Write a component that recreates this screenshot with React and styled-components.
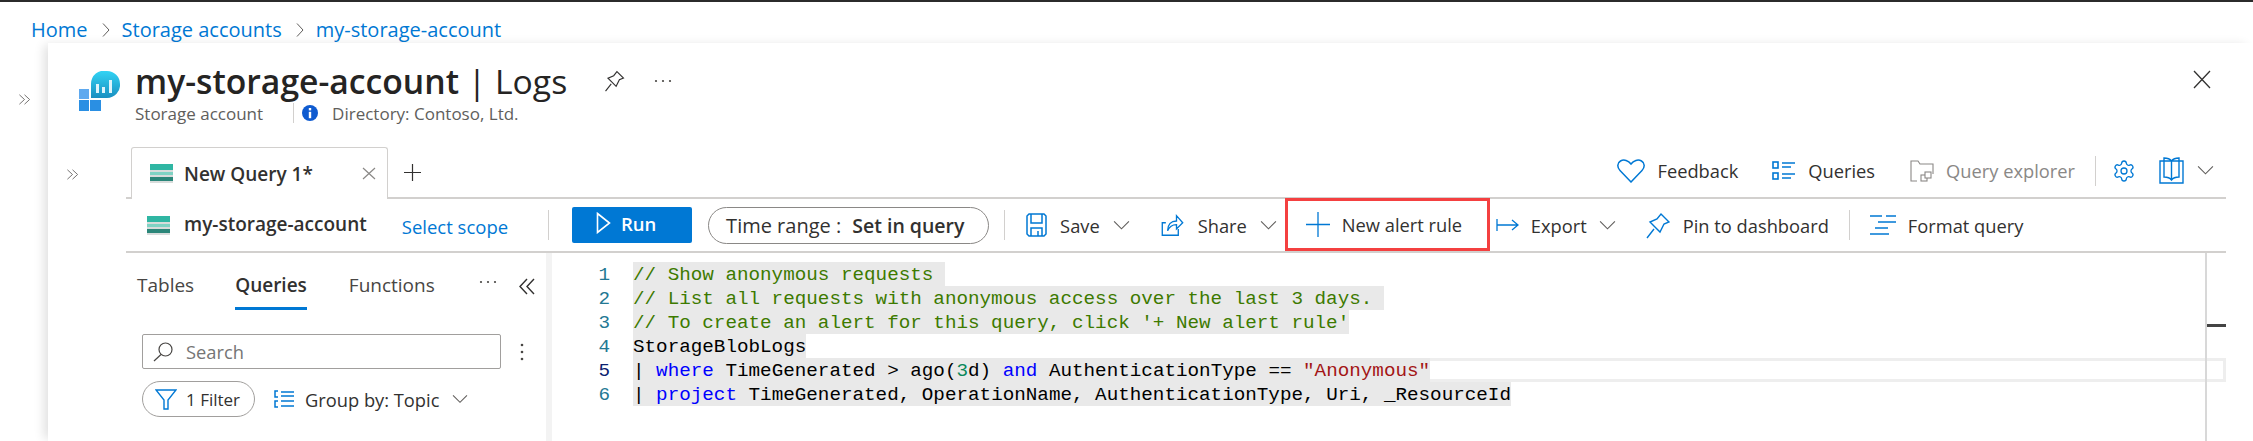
import React from "react";
import styled, { createGlobalStyle } from "styled-components";
import { Settings } from "lucide-react";

const GlobalStyle = createGlobalStyle`
  html, body {
    margin: 0;
    background: #fff;
    font-family: "Open Sans", "Noto Sans", sans-serif;
    color: #323130;
  }
`;

const Page = styled.div`
  width: 2253px;
  height: 441px;
  overflow: hidden;
  border-top: 2px solid #2b2b2b;
  box-sizing: border-box;
`;

const Breadcrumb = styled.div`
  height: 41px;
  display: flex;
  align-items: center;
  padding: 14px 0 0 31px;
  box-sizing: border-box;
  font-size: 20px;
  color: #0078d4;
`;

const CrumbSep = styled.span`
  display: flex;
  margin: 0 12px 0 14px;
`;

const Body = styled.div`
  display: flex;
  height: 398px;
`;

const OuterRail = styled.div`
  width: 48px;
  padding: 45px 0 0 18px;
  box-sizing: border-box;
  color: #605e5c;
`;

const Blade = styled.div`
  flex: 1;
  box-shadow: -6px 0 10px -2px rgba(0, 0, 0, 0.12);
  display: flex;
  flex-direction: column;
`;

const Header = styled.div`
  height: 104px;
  display: flex;
  padding: 28px 0 0 31px;
  box-sizing: border-box;
`;

const ResourceIcon = styled.div`
  width: 41px;
  margin-right: 15px;
`;

const HeaderText = styled.div`
  display: flex;
  flex-direction: column;
`;

const TitleRow = styled.div`
  display: flex;
  align-items: center;
  height: 36px;
  margin-top: -8px;
`;

const Title = styled.h1`
  margin: 0;
  font-size: 33.7px;
  font-weight: 600;
  white-space: nowrap;
  color: #252423;
`;

const TitleLight = styled.span`
  font-weight: 400;
`;

const PinBtn = styled.span`
  display: flex;
  margin-left: 36px;
`;

const MoreDots = styled.span`
  display: flex;
  margin-left: 28px;
`;

const Meta = styled.div`
  display: flex;
  align-items: center;
  height: 30px;
  margin-top: -1px;
  font-size: 17px;
  color: #605e5c;
  white-space: nowrap;
`;

const MetaDivider = styled.span`
  width: 1px;
  height: 20px;
  background: #d2d0ce;
  margin: 0 8px 0 30px;
`;

const InfoDot = styled.span`
  display: flex;
  margin-right: 14px;
`;

const CloseBtn = styled.span`
  display: flex;
  margin: -1px 0 0 auto;
  padding-right: 42px;
`;

const Workspace = styled.div`
  flex: 1;
  display: flex;
`;

const InnerRail = styled.div`
  width: 78px;
  padding: 16px 0 0 18px;
  box-sizing: border-box;
  color: #605e5c;
`;

const Main = styled.div`
  width: 2100px;
  display: flex;
  flex-direction: column;
`;

const TabRow = styled.div`
  height: 52px;
  display: flex;
  align-items: flex-end;
  border-bottom: 2px solid #d2d0ce;
  box-sizing: border-box;
  padding-left: 5px;
  flex: none;
`;

const Tab = styled.div`
  width: 257px;
  height: 52px;
  margin-bottom: -2px;
  box-sizing: border-box;
  background: #fff;
  border: 1px solid #d2d0ce;
  border-bottom: none;
  border-radius: 3px 3px 0 0;
  display: flex;
  align-items: center;
  padding: 0 0 0 18px;
  font-size: 19px;
  font-weight: 600;
  white-space: nowrap;
`;

const TabTitle = styled.span`
  margin-left: 11px;
  flex: 1;
`;

const TabClose = styled.span`
  display: flex;
  margin-right: 11px;
`;

const AddTab = styled.span`
  display: flex;
  align-self: center;
  margin-left: 16px;
`;

const TabActions = styled.div`
  align-self: center;
  margin: 0 0 3px auto;
  display: flex;
  align-items: center;
  padding-right: 12px;
  font-size: 18.3px;
  white-space: nowrap;
`;

const Action = styled.span`
  display: flex;
  align-items: center;
  gap: 12px;
  margin-left: ${(p) => p.$left || 0}px;
  color: ${(p) => (p.$muted ? "#8a8886" : "#323130")};
`;

const Divider = styled.span`
  width: 1px;
  height: 30px;
  background: #d2d0ce;
  flex: none;
  margin: ${(p) => p.$margin};
`;

const Toolbar = styled.div`
  height: 54px;
  flex: none;
  display: flex;
  align-items: center;
  border-bottom: 2px solid #d2d0ce;
  box-sizing: border-box;
  font-size: 18.3px;
  white-space: nowrap;
  padding-left: 21px;
`;

const ScopeName = styled.span`
  margin-left: 14px;
  font-size: 19px;
  font-weight: 600;
  margin-bottom: 3px;
`;

const ScopeLink = styled.span`
  margin-left: 35px;
  font-size: 18.5px;
  color: #0078d4;
  margin-top: 3px;
`;

const RunButton = styled.button`
  width: 120px;
  height: 36px;
  border: none;
  border-radius: 2px;
  background: #0078d4;
  color: #fff;
  font: inherit;
  font-size: 18.5px;
  font-weight: 600;
  display: flex;
  align-items: center;
  justify-content: center;
  gap: 10px;
  padding: 0 12px 4px 0;
`;

const TimePill = styled.div`
  width: 281px;
  height: 37px;
  margin-left: 16px;
  border: 1px solid #8a8886;
  border-radius: 19px;
  box-sizing: border-box;
  display: flex;
  align-items: center;
  padding-left: 17px;
  gap: 11px;
  font-size: 20px;
`;

const Strong = styled.span`
  font-weight: 600;
  font-size: 19.5px;
`;

const ToolItem = styled.span`
  display: flex;
  align-items: center;
  gap: ${(p) => p.$gap || 13}px;
  margin-left: ${(p) => p.$left || 0}px;
`;

const Caret = styled.span`
  display: flex;
  margin-left: ${(p) => p.$left || 0}px;
`;

const AlertButton = styled.span`
  align-self: flex-start;
  height: 53px;
  width: 205px;
  margin: -1px 0 0 8px;
  box-sizing: border-box;
  border: 3px solid #f44040;
  display: flex;
  align-items: center;
  padding: 0 0 0 18px;
  gap: 12px;
`;

const Workbench = styled.div`
  flex: 1;
  display: flex;
  min-height: 0;
`;

const SidePane = styled.div`
  width: 426px;
  flex: none;
  box-sizing: border-box;
  border-right: 6px solid #f3f3f3;
  font-size: 18.3px;
`;

const SideTabs = styled.div`
  height: 58px;
  display: flex;
  align-items: flex-start;
  padding: 19px 0 0 11px;
  box-sizing: border-box;
  font-size: 19px;
`;

const SideTab = styled.span`
  height: 38px;
  box-sizing: border-box;
  margin-right: ${(p) => p.$right}px;
  font-weight: ${(p) => (p.$active ? 600 : 400)};
  border-bottom: ${(p) => (p.$active ? "3px solid #0078d4" : "none")};
  color: ${(p) => (p.$active ? "#323130" : "#484644")};
`;

const SideIcon = styled.span`
  display: flex;
  margin: ${(p) => p.$margin};
`;

const SearchRow = styled.div`
  display: flex;
  align-items: center;
  margin: 23px 0 0 16px;
`;

const SearchBox = styled.div`
  width: 359px;
  height: 35px;
  border: 1px solid #a19f9d;
  border-radius: 2px;
  box-sizing: border-box;
  display: flex;
  align-items: center;
  padding-left: 10px;
  gap: 13px;
  color: #757575;
`;

const FilterRow = styled.div`
  display: flex;
  align-items: center;
  margin: 12px 0 0 16px;
`;

const FilterPill = styled.div`
  width: 113px;
  height: 36px;
  border: 1px solid #a19f9d;
  border-radius: 18px;
  box-sizing: border-box;
  display: flex;
  align-items: center;
  padding-left: 12px;
  gap: 9px;
  font-size: 17px;
`;

const GroupBy = styled.span`
  display: flex;
  align-items: center;
  margin-left: 19px;
  gap: 11px;
`;

const Editor = styled.div`
  flex: 1;
  position: relative;
  padding-top: 9px;
`;

const CodeLine = styled.div`
  height: 24px;
  display: flex;
  font-family: "Liberation Mono", "DejaVu Sans Mono", monospace;
  font-size: 19.26px;
  line-height: 26px;
  white-space: pre;
`;

const LineNo = styled.span`
  width: 81px;
  padding-right: 23px;
  box-sizing: border-box;
  text-align: right;
  flex: none;
  color: ${(p) => (p.$current ? "#0b216f" : "#237893")};
`;

const CodeText = styled.span`
  position: relative;
  background: ${(p) => (p.$selected ? "#e9e9e9" : "transparent")};
  color: ${(p) => p.$color || "#000"};
`;

const CurrentLine = styled.div`
  position: absolute;
  left: 81px;
  width: 1593px;
  top: 105px;
  height: 24px;
  box-sizing: border-box;
  border: 3px solid #eee;
  border-left: none;
`;

const Kw = styled.span`
  color: #0000ff;
`;

const Str = styled.span`
  color: #a31515;
`;

const Num = styled.span`
  color: #09885a;
`;

const Ruler = styled.div`
  position: absolute;
  left: 1653px;
  top: 0;
  bottom: 0;
  width: 21px;
  box-sizing: border-box;
  border-left: 2px solid #d8d8d8;
`;

const RulerMark = styled.div`
  position: absolute;
  left: 0;
  right: 0;
  top: ${(p) => p.$top}px;
  height: 3px;
  background: ${(p) => p.$color};
`;

const Chevron = ({ size = 18 }) => (
  <svg width={size} height={size * 0.6} viewBox="0 0 18 11" fill="none" stroke="#605e5c" strokeWidth="1.2">
    <path d="M1 1.5l8 8 8-8" />
  </svg>
);

const Doubles = () => (
  <svg width="13" height="11" viewBox="0 0 14 14" preserveAspectRatio="none" fill="none" stroke="#605e5c" strokeWidth="1">
    <path d="M1.5 1L7 7l-5.5 6M7 1l5.500 6L7 13" />
  </svg>
);

const Sep = () => (
  <CrumbSep>
    <svg width="8" height="16" viewBox="0 0 8 16" fill="none" stroke="#605e5c" strokeWidth="1">
      <path d="M1 1.5L7 8l-6 6.5" />
    </svg>
  </CrumbSep>
);

const QueryIcon = () => (
  <svg width="23" height="19" viewBox="0 0 23 19">
    <rect width="23" height="19" fill="#d8dcdb" />
    <rect width="23" height="6" fill="#2fb6a3" />
    <rect y="8" width="23" height="3" fill="#7fd3c4" />
    <rect y="13" width="23" height="4" fill="#2b8679" />
  </svg>
);

const Pin = ({ color = "#323130", w = 23, h = 22 }) => (
  <svg width={w} height={h} viewBox="0 0 24 27" fill="none" stroke={color} strokeWidth="1.4">
    <path d="M15 2l8 8-5 2-4 8-10-10 7-3zM8 17L1 26" />
  </svg>
);

const Dots = () => (
  <svg width="18" height="4" viewBox="0 0 18 4" fill="#484644">
    <circle cx="2" cy="2" r="1.1" />
    <circle cx="9" cy="2" r="1.1" />
    <circle cx="16" cy="2" r="1.1" />
  </svg>
);

export default function App() {
  return (
    <Page>
      <GlobalStyle />
      <Breadcrumb>
        Home
        <Sep />
        Storage accounts
        <Sep />
        my-storage-account
      </Breadcrumb>
      <Body>
        <OuterRail>
          <Doubles />
        </OuterRail>
        <Blade>
          <Header>
            <ResourceIcon>
              <svg width="41" height="40" viewBox="0 0 41 40">
                <defs>
                  <linearGradient id="bubble" x1="0" y1="0" x2="0" y2="1">
                    <stop offset="0" stopColor="#32d4f5" />
                    <stop offset="1" stopColor="#1a8fc0" />
                  </linearGradient>
                </defs>
                <path d="M28 0a13 13 0 0 1 13 13 13 13 0 0 1-13 14H12V13A13 13 0 0 1 28 0z" fill="url(#bubble)" />
                <rect x="17" y="13" width="3" height="9" fill="#dff4fb" />
                <rect x="23" y="16" width="3" height="6" fill="#dff4fb" />
                <rect x="30" y="9" width="3" height="13" fill="#dff4fb" />
                <rect y="18" width="10" height="10" fill="#5ea9ef" />
                <rect y="29" width="10" height="11" fill="#2a8fe3" />
                <rect x="11" y="29" width="11" height="11" fill="#2a8fe3" />
              </svg>
            </ResourceIcon>
            <HeaderText>
              <TitleRow>
                <Title>
                  my-storage-account <TitleLight>| Logs</TitleLight>
                </Title>
                <PinBtn>
                  <Pin />
                </PinBtn>
                <MoreDots>
                  <Dots />
                </MoreDots>
              </TitleRow>
              <Meta>
                Storage account
                <MetaDivider />
                <InfoDot>
                  <svg width="16" height="16" viewBox="0 0 16 16">
                    <circle cx="8" cy="8" r="8" fill="#0f5bd0" />
                    <rect x="6.8" y="6.8" width="2.4" height="6.4" fill="#fff" />
                    <rect x="6.8" y="3" width="2.4" height="2.4" fill="#fff" />
                  </svg>
                </InfoDot>
                Directory: Contoso, Ltd.
              </Meta>
            </HeaderText>
            <CloseBtn>
              <svg width="18" height="19" viewBox="0 0 18 19" fill="none" stroke="#323130" strokeWidth="1.3">
                <path d="M1 1l16 17M17 1L1 18" />
              </svg>
            </CloseBtn>
          </Header>
          <Workspace>
            <InnerRail>
              <Doubles />
            </InnerRail>
            <Main>
              <TabRow>
                <Tab>
                  <QueryIcon />
                  <TabTitle>New Query 1*</TabTitle>
                  <TabClose>
                    <svg width="14" height="13" viewBox="0 0 14 13" fill="none" stroke="#8a8886" strokeWidth="1.2">
                      <path d="M1 1l12 11M13 1L1 12" />
                    </svg>
                  </TabClose>
                </Tab>
                <AddTab>
                  <svg width="17" height="17" viewBox="0 0 17 17" fill="none" stroke="#323130" strokeWidth="1.2">
                    <path d="M8.5 0v17M0 8.5h17" />
                  </svg>
                </AddTab>
                <TabActions>
                  <Action>
                    <svg width="28" height="24" viewBox="0 0 28 24" fill="none" stroke="#0078d4" strokeWidth="1.5">
                      <path d="M14 23L3 11.5C0 8.500 0 4 3.500 2 7 0 11.500 1.500 14 5c2.500-3.500 7-5 10.500-3 3.500 2 3.500 6.500.500 9.500z" />
                    </svg>
                    Feedback
                  </Action>
                  <Action $left={34}>
                    <svg width="24" height="20" viewBox="0 0 24 20" fill="none" stroke="#0078d4" strokeWidth="1.6">
                      <rect x="1" y="1" width="5" height="6" />
                      <rect x="1" y="12" width="5" height="6" />
                      <path d="M10 2h13M10 6h9M10 13h13M10 17h9" />
                    </svg>
                    Queries
                  </Action>
                  <Action $left={35} $muted>
                    <svg width="24" height="22" viewBox="0 0 24 22" fill="none" stroke="#8a8886" strokeWidth="1.1">
                      <path d="M7 21H1V1h7l2 3h13v10" />
                      <rect x="11" y="15" width="6" height="6" fill="#fff" />
                      <rect x="15" y="12" width="6" height="6" fill="#fff" />
                    </svg>
                    Query explorer
                  </Action>
                  <Divider $margin="0 16px 0 20px" />
                  <Settings size={24} color="#0078d4" strokeWidth={1.3} />
                  <Action $left={23}>
                    <svg width="25" height="27" viewBox="0 0 25 27" fill="none" stroke="#0078d4" strokeWidth="1.4">
                      <path d="M1 4h23v22H1zM5 1c3 0 6 1 7.500 3C14 2 17 1 20 1v19c-3 0-6 1-7.500 3C11 21 8 20 5 20zM12.500 4v19" />
                    </svg>
                  </Action>
                  <Action $left={13}>
                    <Chevron size={17} />
                  </Action>
                </TabActions>
              </TabRow>
              <Toolbar>
                <QueryIcon />
                <ScopeName>my-storage-account</ScopeName>
                <ScopeLink>Select scope</ScopeLink>
                <Divider $margin="0 23px 0 40px" />
                <RunButton>
                  <svg width="15" height="22" viewBox="0 0 15 22" fill="none" stroke="#fff" strokeWidth="1.6">
                    <path d="M1.500 1.500l12 9.500-12 9.500z" />
                  </svg>
                  Run
                </RunButton>
                <TimePill>
                  Time range :<Strong>Set in query</Strong>
                </TimePill>
                <Divider $margin="0 21px 0 15px" />
                <ToolItem>
                  <svg width="21" height="24" viewBox="0 0 21 24" fill="none" stroke="#0078d4" strokeWidth="1.5">
                    <path d="M3 1h15l2 2v18l-2 2H3l-2-2V3zM5 1v9h11V1M5 23v-8h11v8M12 18v5" />
                  </svg>
                  Save
                  <Chevron size={17} />
                </ToolItem>
                <ToolItem $left={30}>
                  <svg width="25" height="24" viewBox="0 0 25 27" fill="none" stroke="#0078d4" strokeWidth="1.5">
                    <path d="M5 11H1v14h18v-7M7 20c0-7 4-11 10-11V3l7 8-7 7v-5c-4 0-8 2-10 7z" />
                  </svg>
                  Share
                  <Chevron size={17} />
                </ToolItem>
                <AlertButton>
                  <svg width="24" height="25" viewBox="0 0 24 25" fill="none" stroke="#0078d4" strokeWidth="1.3">
                    <path d="M12 0v25M0 12.500h24" />
                  </svg>
                  New alert rule
                </AlertButton>
                <ToolItem $left={6} $gap={12}>
                  <svg width="23" height="14" viewBox="0 0 23 14" fill="none" stroke="#0078d4" strokeWidth="1.3">
                    <path d="M1 1v12M1 7h21M16 2l6 5-6 5" />
                  </svg>
                  Export
                  <Chevron size={17} />
                </ToolItem>
                <ToolItem $left={30}>
                  <Pin color="#0078d4" w={24} h={27} />
                  Pin to dashboard
                </ToolItem>
                <Divider $margin="0 19px 0 20px" />
                <ToolItem $gap={11}>
                  <svg width="28" height="22" viewBox="0 0 28 22" fill="none" stroke="#0078d4" strokeWidth="1.5">
                    <path d="M1 2h12M17 2h10M9 8h18M6 14h13M1 20h19" />
                  </svg>
                  Format query
                </ToolItem>
              </Toolbar>
              <Workbench>
                <SidePane>
                  <SideTabs>
                    <SideTab $right={41}>Tables</SideTab>
                    <SideTab $right={42} $active>
                      Queries
                    </SideTab>
                    <SideTab $right={44}>Functions</SideTab>
                    <SideIcon $margin="8px 0 0 0">
                      <Dots />
                    </SideIcon>
                    <SideIcon $margin="6px 0 0 22px">
                      <svg width="16" height="17" viewBox="0 0 16 17" fill="none" stroke="#323130" strokeWidth="1.4">
                        <path d="M8 1L1 8.500 8 16M15 1L8 8.500l7 7.500" />
                      </svg>
                    </SideIcon>
                  </SideTabs>
                  <SearchRow>
                    <SearchBox>
                      <svg width="20" height="20" viewBox="0 0 20 20" fill="none" stroke="#484644" strokeWidth="1.2">
                        <circle cx="12.500" cy="7.500" r="6.500" />
                        <path d="M8 12.500L1 19" />
                      </svg>
                      Search
                    </SearchBox>
                    <SideIcon $margin="0 0 0 19px">
                      <svg width="4" height="18" viewBox="0 0 4 18" fill="#484644">
                        <circle cx="2" cy="2" r="1.3" />
                        <circle cx="2" cy="9" r="1.3" />
                        <circle cx="2" cy="16" r="1.3" />
                      </svg>
                    </SideIcon>
                  </SearchRow>
                  <FilterRow>
                    <FilterPill>
                      <svg width="22" height="22" viewBox="0 0 22 22" fill="none" stroke="#0078d4" strokeWidth="1.4">
                        <path d="M1 2h20l-8 10v9H9v-9z" />
                      </svg>
                      1 Filter
                    </FilterPill>
                    <GroupBy>
                      <svg width="20" height="18" viewBox="0 0 20 18" fill="none" stroke="#0078d4" strokeWidth="1.5">
                        <path d="M4 1H1v6h3M4 11H1v6h3M7 2h13M7 6h13M7 11h13M7 16h13" />
                      </svg>
                      Group by: Topic
                      <Caret $left={2}>
                        <Chevron size={16} />
                      </Caret>
                    </GroupBy>
                  </FilterRow>
                </SidePane>
                <Editor>
                  <CurrentLine />
                  <CodeLine>
                    <LineNo>1</LineNo>
                    <CodeText $selected $color="#3d7a00">{"// Show anonymous requests "}</CodeText>
                  </CodeLine>
                  <CodeLine>
                    <LineNo>2</LineNo>
                    <CodeText $selected $color="#3d7a00">{"// List all requests with anonymous access over the last 3 days. "}</CodeText>
                  </CodeLine>
                  <CodeLine>
                    <LineNo>3</LineNo>
                    <CodeText $selected $color="#3d7a00">{"// To create an alert for this query, click '+ New alert rule'"}</CodeText>
                  </CodeLine>
                  <CodeLine>
                    <LineNo>4</LineNo>
                    <CodeText $selected>StorageBlobLogs</CodeText>
                  </CodeLine>
                  <CodeLine>
                    <LineNo $current>5</LineNo>
                    <CodeText $selected>
                      | <Kw>where</Kw> TimeGenerated {">"} ago(<Num>3</Num>d) <Kw>and</Kw> AuthenticationType == <Str>"Anonymous"</Str>
                    </CodeText>
                  </CodeLine>
                  <CodeLine>
                    <LineNo>6</LineNo>
                    <CodeText $selected>
                      | <Kw>project</Kw> TimeGenerated, OperationName, AuthenticationType, Uri, _ResourceId
                    </CodeText>
                  </CodeLine>
                  <Ruler>
                    <RulerMark $top={71} $color="#444" />
                  </Ruler>
                </Editor>
              </Workbench>
            </Main>
          </Workspace>
        </Blade>
      </Body>
    </Page>
  );
}
